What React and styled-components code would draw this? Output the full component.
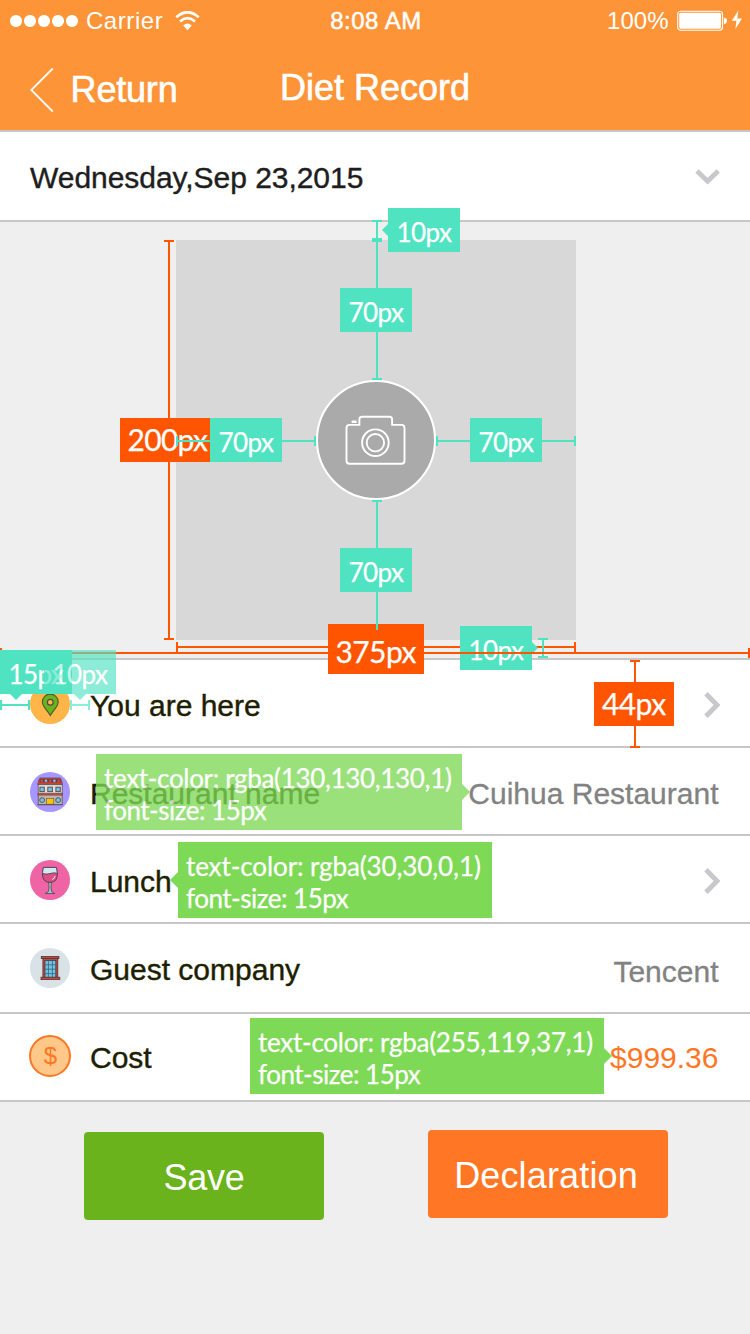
import React from "react";
import styled, { createGlobalStyle, css } from "styled-components";

const color = {
  brand: "#fd9437",
  line: "#c7c7c7",
  page: "#efefef",
  chevron: "#c7c7cc",
  teal: "#50e3c2",
  red: "#ff5500",
  green: "#7ed957",
  ink: "#1e1e00",
  muted: "#828282",
  price: "#ff7725",
};

const GlobalStyle = createGlobalStyle`
  *, *::before, *::after { box-sizing: border-box; }
  body { margin: 0; background: ${color.page}; }
`;

const Screen = styled.div`
  position: relative;
  width: 750px;
  height: 1334px;
  overflow: hidden;
  background: ${color.page};
  font-family: "Liberation Sans", Arial, sans-serif;
  display: flex;
  flex-direction: column;
`;

/* ---------- header ---------- */

const Header = styled.header`
  height: 132px;
  background: ${color.brand};
  border-bottom: 2px solid ${color.line};
  color: #fff;
`;

const StatusBar = styled.div`
  height: 42px;
  display: grid;
  grid-template-columns: 1fr auto 1fr;
  align-items: center;
  padding: 0 8px 0 10px;
  font-size: 24px;
  line-height: 28px;
`;

const StatusGroup = styled.div`
  display: flex;
  align-items: center;
  justify-content: ${(p) => (p.$end ? "flex-end" : "flex-start")};
`;

const Signal = styled.div`
  display: flex;
  gap: 2.6px;
  margin-right: 8px;
`;

const SignalDot = styled.span`
  width: 11.5px;
  height: 11.5px;
  border-radius: 50%;
  background: #fff;
`;

const Carrier = styled.span`
  letter-spacing: 0.6px;
  margin-right: 11.5px;
`;

const Clock = styled.span`
  letter-spacing: 0.5px;
  -webkit-text-stroke: 0.5px #fff;
`;

const Percent = styled.span`
  margin-right: 8.5px;
`;

const NavBar = styled.div`
  height: 88px;
  display: grid;
  grid-template-columns: 1fr auto 1fr;
  align-items: center;
  padding: 0 30px;
  font-size: 36px;
  line-height: 42px;
  -webkit-text-stroke: 0.6px #fff;
`;

const BackLink = styled.div`
  display: flex;
  align-items: center;
  gap: 16.6px;
  padding-top: 7px;
  letter-spacing: -0.2px;
`;

const Title = styled.div`
  padding-top: 3px;
`;

/* ---------- rows ---------- */

const DateRow = styled.section`
  height: 90px;
  display: flex;
  align-items: center;
  justify-content: space-between;
  padding: 2px 29px 0 30px;
  background: #fff;
  border-bottom: 2px solid ${color.line};
  color: #1e1e1e;
  font-size: 30px;
  line-height: 36px;
  letter-spacing: -0.04px;
  -webkit-text-stroke: 0.4px #1e1e1e;
`;

const DateText = styled.span`
  padding-top: 2px;
`;

const PhotoArea = styled.section`
  height: 438px;
  padding: 18px 0 0 2px;
  display: flex;
  justify-content: center;
  align-items: flex-start;
  border-bottom: 2px solid ${color.line};
`;

const PhotoBox = styled.div`
  width: 400px;
  height: 400px;
  display: flex;
  align-items: center;
  justify-content: center;
  background: #d8d8d8;
`;

const CameraButton = styled.div`
  width: 120px;
  height: 120px;
  border-radius: 50%;
  border: 2px solid #fff;
  background: #aaa;
  svg {
    display: block;
    margin: -2px;
  }
`;

const Row = styled.section`
  height: ${(p) => p.$height || 88}px;
  display: flex;
  align-items: center;
  padding: ${(p) => p.$pad || "2px 0 0"};
  background: #fff;
  border-bottom: 2px solid ${color.line};
  font-size: 30px;
  line-height: 36px;
`;

const IconSlot = styled.div`
  width: 90px;
  display: flex;
  padding-left: ${(p) => p.$left || 30}px;
`;

const RowLabel = styled.span`
  flex: 1;
  padding-top: 3px;
  color: ${color.ink};
  -webkit-text-stroke: 0.4px ${color.ink};
`;

const RowValue = styled.span`
  padding: ${(p) => p.$top || 3}px 31.5px 0 0;
  color: ${(p) => (p.$price ? color.price : color.muted)};
  -webkit-text-stroke: ${(p) => (p.$price ? 0 : 0.3)}px ${color.muted};
`;

const RowChevron = styled.span`
  display: flex;
  padding: 2px 29px 0 0;
`;

const Coin = styled.div`
  width: 42px;
  height: 42px;
  padding-left: 1px;
  border: 2px solid ${color.price};
  border-radius: 50%;
  background: #ffc788;
  color: ${color.price};
  font-size: 24px;
  line-height: 38px;
  text-align: center;
`;

const Actions = styled.section`
  display: flex;
  justify-content: space-between;
  align-items: flex-start;
  padding: 28px 82px 0 84px;
`;

const ActionButton = styled.button`
  width: 240px;
  height: 88px;
  margin: ${(p) => p.$top || 0}px 0 0;
  padding: 4px ${(p) => p.$shift || 0}px 0 0;
  border: 0;
  border-radius: 4px;
  background: ${(p) => p.$fill};
  color: #fff;
  font: 36px/42px "Liberation Sans", Arial, sans-serif;
  letter-spacing: ${(p) => p.$track || 0}px;
`;

/* ---------- measurement annotations, floating over the screen ---------- */

const Notes = styled.div`
  position: absolute;
  inset: 0;
  pointer-events: none;
`;

const NoteGroup = styled.div`
  opacity: ${(p) => p.$opacity};
`;

const Ruler = styled.div`
  position: absolute;
  left: ${(p) => p.$x}px;
  top: ${(p) => p.$y}px;
  color: ${(p) => p.$color || color.teal};
  ${(p) =>
    p.$vertical
      ? css`
          width: 10px;
          height: ${p.$length}px;
          background: linear-gradient(currentColor, currentColor) 4px 0 / 2px 100% no-repeat;
          border-top: 2px solid currentColor;
          border-bottom: ${p.$open ? 0 : 2}px solid currentColor;
        `
      : css`
          height: 10px;
          width: ${p.$length}px;
          background: linear-gradient(currentColor, currentColor) 0 4px / 100% 2px no-repeat;
          border-left: 2px solid currentColor;
          border-right: 2px solid currentColor;
        `}
`;

const arrows = {
  left: css`right: 100%; top: 50%; margin-top: calc(-1 * var(--a)); border-right-color: currentColor; border-left-width: 0;`,
  right: css`left: 100%; top: 50%; margin-top: calc(-1 * var(--a)); border-left-color: currentColor; border-right-width: 0;`,
  down: css`top: 100%; left: ${(p) => p.$arrowX}px; margin-left: calc(-1 * var(--a)); border-top-color: currentColor; border-bottom-width: 0;`,
};

const Tag = styled.div`
  --a: ${(p) => p.$arrowSize || 6}px;
  position: absolute;
  left: ${(p) => p.$x}px;
  top: ${(p) => p.$y}px;
  width: ${(p) => p.$w || 72}px;
  height: ${(p) => p.$h || 44}px;
  padding-left: ${(p) => p.$inset ?? 8.5}px;
  color: ${(p) => p.$color || color.teal};
  background: currentColor;
  font-family: Lato, "Open Sans", sans-serif;
  font-size: ${(p) => p.$size || 26}px;
  line-height: ${(p) => p.$line || 48}px;
  letter-spacing: ${(p) => p.$track ?? -0.6}px;
  white-space: nowrap;
  ${(p) =>
    p.$arrow &&
    css`
      &::after {
        content: "";
        position: absolute;
        border: var(--a) solid transparent;
        ${arrows[p.$arrow]}
      }
    `}
`;

const TagText = styled.span`
  display: block;
  color: #fff;
  -webkit-text-stroke: 0.25px #fff;
`;

const NoteLines = styled.div`
  padding-top: 8px;
`;

const SizeLine = styled(TagText)`
  letter-spacing: -0.5px;
`;

function Measure({ children, ...rest }) {
  return (
    <Tag {...rest}>
      <TagText>{children}</TagText>
    </Tag>
  );
}

function StyleNote({ rgba, ...rest }) {
  return (
    <Tag $color={color.green} $h={76} $line={32} $arrowSize={8} $inset={8} {...rest}>
      <NoteLines>
        <TagText>text-color: rgba({rgba})</TagText>
        <SizeLine>font-size: 15px</SizeLine>
      </NoteLines>
    </Tag>
  );
}

/* ---------- icons ---------- */

const Chevron = ({ down }) => (
  <svg width={down ? 26 : 17} height={down ? 17 : 28} fill="none" stroke={color.chevron} strokeWidth="4.8">
    <path d={down ? "M2 2 L12.6 12.2 L23.2 2" : "M2 2.8 L13 14 L2 25.2"} />
  </svg>
);

const BackIcon = () => (
  <svg width="24" height="46" fill="none" stroke="#fff" strokeWidth="1.8">
    <path d="M22.8 1.5 L1.3 23 L22.8 44.5" />
  </svg>
);

const WifiIcon = () => (
  <svg width="25" height="20" viewBox="0 0 25 20" fill="none" stroke="#fff">
    <path d="M1.3 6.2 Q12.5 -3.6 23.7 6.2" strokeWidth="2.7" />
    <path d="M5 10.4 Q12.5 3.8 20 10.4" strokeWidth="2.6" />
    <path d="M8.2 14.6 Q12.5 10.6 16.8 14.6 L12.5 19.2 Z" fill="#fff" stroke="none" />
  </svg>
);

const BatteryIcon = () => (
  <svg width="65" height="22" viewBox="0 0 65 22" fill="#fff">
    <rect x="0.7" y="1.2" width="44.8" height="19" rx="3" fill="none" stroke="#fff" strokeWidth="1.1" />
    <rect x="2.2" y="2.7" width="41.8" height="16" rx="1.6" />
    <path d="M46.8 7.6 Q50 8.2 50 10.8 Q50 13.6 46.8 14.2 Z" />
    <path d="M61.3 0.5 L54.8 10.8 H59.4 L58.4 19 L65 8.4 H60.3 Z" />
  </svg>
);

const CameraIcon = () => (
  <svg width="120" height="120" fill="none" stroke="#fff" strokeWidth="1.9">
    <path d="M33.5 44.9 H43.4 V39.5 Q43.4 36.8 46 36.8 H73.5 Q76.1 36.8 76.1 39.5 V44.9 H85.5 Q88.5 44.9 88.5 48 V80.8 Q88.5 83.8 85.5 83.8 H33.5 Q30.5 83.8 30.5 80.8 V48 Q30.5 44.9 33.5 44.9 Z" />
    <circle cx="59.4" cy="62.7" r="13.3" />
    <circle cx="59.4" cy="62.7" r="8.7" />
    <rect x="35.4" y="40.5" width="5.4" height="2.5" rx="1.2" fill="#fff" stroke="none" />
  </svg>
);

const PinIcon = () => (
  <svg width="40" height="40">
    <circle cx="20" cy="20" r="20" fill="#ffb548" />
    <path
      d="M20.3 31.5 C17.2 26 12.4 22.8 12.4 18 A7.9 7.9 0 0 1 28.2 18 C28.2 22.8 23.4 26 20.3 31.5 Z"
      fill="#6ab31c"
      stroke="#4b5a2c"
      strokeWidth="1.1"
    />
    <circle cx="20.3" cy="18.2" r="2.9" fill="#ffb548" stroke="#4d4a4c" strokeWidth="1.2" />
  </svg>
);

const RestaurantIcon = () => (
  <svg width="40" height="40" stroke="#5a5054" strokeWidth="0.8">
    <circle cx="20" cy="20" r="20" fill="#a796ff" stroke="none" />
    <rect x="8.2" y="12" width="24" height="11" fill="#e9dfda" />
    <rect x="8.2" y="22" width="24" height="10.8" fill="#bdb7b4" />
    <path d="M10 6 H30.2 Q31.8 7.6 32.4 12.6 H7.8 Q8.4 7.6 10 6 Z" fill="#c8423c" />
    <rect x="9.8" y="7.2" width="20.8" height="3" fill="#5d4045" stroke="none" />
    <g fill="#e2483f" stroke="none">
      <circle cx="11.8" cy="8.7" r="1.2" />
      <circle cx="20.2" cy="8.7" r="1.2" />
      <circle cx="28.6" cy="8.7" r="1.2" />
    </g>
    <g fill="#8cc9e4" stroke="none">
      <circle cx="16" cy="8.7" r="1.2" />
      <circle cx="24.4" cy="8.7" r="1.2" />
    </g>
    <g fill="#6fc6ea" strokeWidth="1">
      <rect x="9.9" y="15.2" width="4.4" height="4.4" />
      <rect x="17.8" y="15.2" width="4.6" height="4.4" />
      <rect x="25.9" y="15.2" width="4.4" height="4.4" />
      <circle cx="12.1" cy="28.1" r="2.4" />
      <circle cx="28.1" cy="28.1" r="2.4" />
    </g>
    <path d="M7.9 21.2 H32.4 V23.2 H7.9 Z" fill="#d9463c" strokeWidth="0.6" />
    <rect x="16.6" y="26.4" width="7.2" height="5.8" fill="#fbc600" strokeWidth="0.6" />
    <path d="M7.6 32.6 H32.6" />
  </svg>
);

const WineIcon = () => (
  <svg width="40" height="40" stroke="#4a4550" strokeWidth="1" strokeLinejoin="round">
    <circle cx="20" cy="20" r="20" fill="#ee64a4" stroke="none" />
    <path d="M13.4 7.4 H26.4 L27.3 13.6 H12.4 Z" fill="#cfeaf2" stroke="none" />
    <path d="M12.5 13 Q16 15.4 20 13.6 Q24 12 27.4 13.4 C27.6 19 24.5 22.4 20 22.4 C15.4 22.4 12.2 19 12.5 13 Z" fill="#dc4f84" stroke="none" />
    <path d="M12.5 13.4 Q16 15.2 20 13.6 Q24 12.2 27.3 13.2" fill="none" strokeWidth="0.8" />
    <path d="M13.4 7.4 H26.4 C28 14 28.4 22.4 20 22.4 C11.5 22.4 11.9 14 13.4 7.4 Z" fill="none" />
    <path d="M22.6 19.4 Q24.8 18.4 25 16.4" fill="none" stroke="#fff" strokeWidth="0.9" strokeLinecap="round" />
    <path d="M18.7 22.5 Q19.6 29 18.4 31.6 L15.2 33.5 H24.8 L21.6 31.6 Q20.6 29 21.3 22.5 Z" fill="#a9c3cf" strokeWidth="0.8" />
  </svg>
);

const WindowIcon = () => (
  <svg width="40" height="40" stroke="#513535" strokeWidth="0.8">
    <circle cx="20" cy="20" r="20" fill="#d9e2e6" stroke="none" />
    <rect x="12.9" y="10.2" width="14.9" height="19.4" fill="#bd4a3e" />
    <rect x="15" y="12.4" width="10.8" height="17" fill="#69c8ee" />
    <path d="M18.4 12.4 V29.4 M22.4 12.4 V29.4 M15 16.8 H25.8 M15 21.2 H25.8 M15 25.6 H25.8" stroke="#43606e" strokeWidth="0.8" />
    <rect x="11.3" y="8.4" width="17.6" height="2.2" fill="#bd4a3e" />
    <rect x="11" y="29.2" width="18.8" height="2.4" fill="#d1463c" />
  </svg>
);

export default function App() {
  return (
    <Screen>
      <GlobalStyle />
      <Header>
        <StatusBar>
          <StatusGroup>
            <Signal>
              {[0, 1, 2, 3, 4].map((i) => (
                <SignalDot key={i} />
              ))}
            </Signal>
            <Carrier>Carrier</Carrier>
            <WifiIcon />
          </StatusGroup>
          <Clock>8:08 AM</Clock>
          <StatusGroup $end>
            <Percent>100%</Percent>
            <BatteryIcon />
          </StatusGroup>
        </StatusBar>
        <NavBar>
          <BackLink>
            <BackIcon />
            <span>Return</span>
          </BackLink>
          <Title>Diet Record</Title>
        </NavBar>
      </Header>

      <DateRow>
        <DateText>Wednesday,Sep 23,2015</DateText>
        <Chevron down />
      </DateRow>

      <PhotoArea>
        <PhotoBox>
          <CameraButton>
            <CameraIcon />
          </CameraButton>
        </PhotoBox>
      </PhotoArea>

      <Row>
        <IconSlot><PinIcon /></IconSlot>
        <RowLabel>You are here</RowLabel>
        <RowChevron><Chevron /></RowChevron>
      </Row>
      <Row>
        <IconSlot><RestaurantIcon /></IconSlot>
        <RowLabel>Restaurant name</RowLabel>
        <RowValue>Cuihua Restaurant</RowValue>
      </Row>
      <Row>
        <IconSlot><WineIcon /></IconSlot>
        <RowLabel>Lunch</RowLabel>
        <RowChevron><Chevron /></RowChevron>
      </Row>
      <Row $height={90} $pad="0">
        <IconSlot><WindowIcon /></IconSlot>
        <RowLabel>Guest company</RowLabel>
        <RowValue $top={7}>Tencent</RowValue>
      </Row>
      <Row $pad="0 0 2px">
        <IconSlot $left={29}><Coin>$</Coin></IconSlot>
        <RowLabel>Cost</RowLabel>
        <RowValue $price>$999.36</RowValue>
      </Row>

      <Actions>
        <ActionButton $fill="#6ab31c" $top={2} $track={-0.3}>Save</ActionButton>
        <ActionButton $fill={color.price} $track={0.15} $shift={4}>Declaration</ActionButton>
      </Actions>

      <Notes>
        <Ruler $vertical $x={164} $y={240} $length={400} $color={color.red} />
        <Measure $x={120} $y={418} $w={90} $color={color.red} $size={30} $line={42} $inset={7.5} $track={-0.7}>200px</Measure>
        <Ruler $x={176} $y={642} $length={400} $color={color.red} />

        <Ruler $vertical $x={372} $y={220} $length={20} />
        <Measure $x={388} $y={208} $arrow="left">10px</Measure>
        <Ruler $vertical $x={372} $y={240} $length={140} />
        <Measure $x={340} $y={288}>70px</Measure>
        <Ruler $x={176} $y={436} $length={140} />
        <Measure $x={210} $y={418}>70px</Measure>
        <Ruler $x={436} $y={436} $length={140} />
        <Measure $x={470} $y={418}>70px</Measure>

        <Ruler $vertical $x={538} $y={638} $length={20} />
        <Measure $x={460} $y={626} $arrow="right">10px</Measure>
        <Ruler $x={0} $y={648} $length={750} $color={color.red} />
        <Measure $x={328} $y={624} $w={96} $h={50} $color={color.red} $size={30} $line={54} $inset={7.5} $track={-0.6}>375px</Measure>
        <Ruler $vertical $open $x={372} $y={500} $length={130} />
        <Measure $x={340} $y={548}>70px</Measure>

        <Ruler $vertical $x={630} $y={660} $length={88} $color={color.red} />
        <Measure $x={594} $y={682} $w={80} $color={color.red} $size={30} $line={42} $inset={8} $track={-0.6}>44px</Measure>

        <Ruler $x={0} $y={700} $length={30} />
        <Measure $x={0} $y={650} $arrow="down" $arrowX={16}>15px</Measure>
        <NoteGroup $opacity={0.65}>
          <Ruler $x={70} $y={700} $length={20} />
          <Measure $x={44} $y={650} $arrow="down" $arrowX={36}>10px</Measure>
        </NoteGroup>

        <NoteGroup $opacity={0.78}>
          <StyleNote $x={96} $y={754} $w={366} $arrow="right" $track={-0.33} rgba="130,130,130,1" />
        </NoteGroup>
        <StyleNote $x={178} $y={842} $w={314} $arrow="left" $track={-0.1} rgba="30,30,0,1" />
        <StyleNote $x={250} $y={1018} $w={354} $arrow="right" $track={-0.26} rgba="255,119,37,1" />
      </Notes>
    </Screen>
  );
}
